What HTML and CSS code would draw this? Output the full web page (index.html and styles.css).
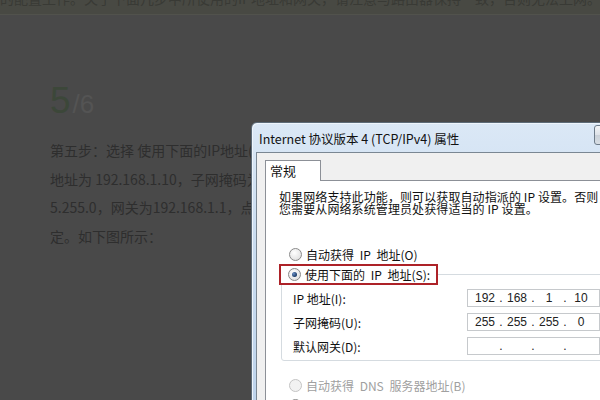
FILE: index.html
```html
<!DOCTYPE html>
<html lang="zh-CN">
<head>
  <meta charset="UTF-8" />
  <title>第五步 - 设置静态IP地址</title>
  <link rel="stylesheet" href="styles.css">
</head>
<body>

<div class="topbar">
  <p>的配置工作。关于下面几步中所使用的IP地址和网关，请注意与路由器保持一致，否则无法上网。</p>
</div>

<div class="step">
  <div class="step-count"><span class="cur">5</span><span class="total">/6</span></div>
  <p class="step-text">
    第五步：选择 使用下面的IP地址(S)，设置IP<br>
    地址为 192.168.1.10，子网掩码为 255.255.25<br>
    5.255.0，网关为192.168.1.1，点击 确<br>
    定。如下图所示：
  </p>
</div>

<div class="dialog">
  <div class="titlebar">
    <span class="title">Internet 协议版本 4 (TCP/IPv4) 属性</span>
    <span class="help">?</span>
  </div>
  <div class="client">
    <div class="tabs"><span class="tab">常规</span></div>
    <div class="panel">
      <p class="intro">如果网络支持此功能，则可以获取自动指派的 IP 设置。否则，<br>您需要从网络系统管理员处获得适当的 IP 设置。</p>

      <div class="option"><span class="radio"></span>自动获得 IP 地址(O)</div>

      <fieldset class="group">
        <legend class="option picked"><span class="radio on"></span>使用下面的 IP 地址(S):</legend>
        <div class="field">
          <label>IP 地址(I):</label>
          <div class="ipbox"><span>192</span><i>.</i><span>168</span><i>.</i><span>1</span><i>.</i><span>10</span></div>
        </div>
        <div class="field">
          <label>子网掩码(U):</label>
          <div class="ipbox"><span>255</span><i>.</i><span>255</span><i>.</i><span>255</span><i>.</i><span>0</span></div>
        </div>
        <div class="field">
          <label>默认网关(D):</label>
          <div class="ipbox"><span></span><i>.</i><span></span><i>.</i><span></span><i>.</i><span></span></div>
        </div>
      </fieldset>

      <div class="option off"><span class="radio"></span>自动获得 DNS 服务器地址(B)</div>
      <div class="option"><span class="radio on"></span>使用下面的 DNS 服务器地址(E):</div>
    </div>
  </div>
</div>

</body>
</html>
```

FILE: styles.css
```css
html, body {
  width: 600px;
  height: 400px;
  overflow: hidden;
}

body {
  margin: 0;
  background: #494949;
  font-family: "Noto Sans CJK SC", sans-serif;
  color: #2b2b2b;
  position: relative;
}

.topbar {
  height: 14px;
  background: #484943;
  border-bottom: 1px solid #51524c;
  overflow: hidden;
}

.topbar p {
  margin: -11px 0 0 0;
  font-size: 14px;
  line-height: 18px;
  color: #393a35;
  white-space: nowrap;
}

.step {
  padding-left: 50px;
}

.step-count {
  margin-top: 65px;
  height: 42px;
  font-family: "Liberation Sans", sans-serif;
  line-height: 42px;
}

.step-count .cur {
  font-size: 37px;
  color: #3c4739;
}

.step-count .total {
  font-size: 26px;
  color: #545454;
  margin-left: 2px;
}

.step-text {
  margin: 14px 0 0 0;
  font-size: 14px;
  line-height: 28.5px;
  color: #2e2e2e;
  white-space: nowrap;
}

/* dialog screenshot laid over the page */
.dialog {
  position: absolute;
  left: 251px;
  top: 122px;
  width: 370px;
  height: 300px;
  background: linear-gradient(180deg, #dbe8f6 0%, #c9dcf0 40%, #bdd3ec 100%);
  border: 1px solid #5d6b78;
  border-radius: 6px 6px 0 0;
  box-shadow: inset 1px 1px 0 #eef5fc;
}

.titlebar {
  height: 29px;
  display: flex;
  align-items: center;
  padding-left: 7px;
}

.title {
  font-family: "Noto Sans CJK SC", sans-serif;
  font-size: 12.5px;
  color: #111;
  margin-top: 1px;
}

.help {
  margin-left: auto;
  margin-right: 2px;
  width: 24px;
  height: 18px;
  align-self: flex-start;
  margin-top: 2px;
  border: 1px solid #6e7c8a;
  border-radius: 3px;
  background: linear-gradient(180deg, #f2f4f6 0%, #dde2e8 50%, #c9d0d8 51%, #d8dee4 100%);
  font-family: "Liberation Sans", sans-serif;
  font-weight: bold;
  font-size: 14px;
  line-height: 18px;
  text-align: center;
  color: #333;
}

.client {
  margin-left: 4px;
  height: 280px;
  background: #f0f0f0;
  border-top: 1px solid #7a8793;
  border-left: 1px solid #7a8793;
  padding: 7px 0 0 8px;
  font-size: 12px;
  color: #111;
}

.tabs {
  display: flex;
  height: 20px;
}

.tab {
  width: 50px;
  padding-left: 4px;
  height: 20px;
  background: #fff;
  border: 1px solid #8c9097;
  border-bottom: none;
  font-size: 13px;
  line-height: 20px;
}

.panel {
  background: #fff;
  border: 1px solid #8c9097;
  height: 260px;
  padding: 10px 0 0 13px;
}

.intro {
  margin: 0;
  line-height: 12px;
  white-space: nowrap;
  letter-spacing: 0.1px;
}

.option {
  display: flex;
  align-items: center;
  height: 20px;
  margin-left: 10px;
  white-space: nowrap;
  word-spacing: 3px;
}

.panel > .option:first-of-type {
  margin-top: 29px;
}

.option.off {
  color: #a0a0a0;
  margin-top: 14px;
}

.option.off .radio {
  border-color: #c4c4c4;
  background: #f2f2f2;
}

.radio {
  width: 11px;
  height: 11px;
  border-radius: 50%;
  border: 1px solid #8a8a8a;
  background: radial-gradient(circle at 40% 35%, #ffffff 0%, #e4e4e4 70%, #cfcfcf 100%);
  margin-right: 4px;
  display: flex;
  align-items: center;
  justify-content: center;
}

.radio.on::after {
  content: "";
  width: 5px;
  height: 5px;
  border-radius: 50%;
  background: radial-gradient(circle at 35% 35%, #6a8fc4 0%, #1a3a66 70%);
}

.group {
  margin: 0 0 0 2px;
  padding: 0 0 2px 11px;
  width: 330px;
  border: 1px solid #d5dbe0;
  border-radius: 3px;
}

.option.picked {
  margin-left: -14px;
  padding: 0 6px 0 7px;
  height: 17px;
  border: 2px solid #ad2228;
}

.field {
  display: flex;
  align-items: center;
  height: 24px;
}

.field:first-of-type {
  margin-top: 1px;
}

.field label {
  width: 174px;
  white-space: nowrap;
}

.ipbox {
  width: 123px;
  height: 16px;
  border: 1px solid #c6c9cc;
  display: flex;
  align-items: center;
  padding: 0 4px;
  font-family: "Liberation Sans", sans-serif;
  font-size: 12px;
  color: #222;
}

.ipbox span {
  width: 26px;
  text-align: center;
}

.ipbox i {
  font-style: normal;
  width: 6px;
  text-align: center;
}
```
